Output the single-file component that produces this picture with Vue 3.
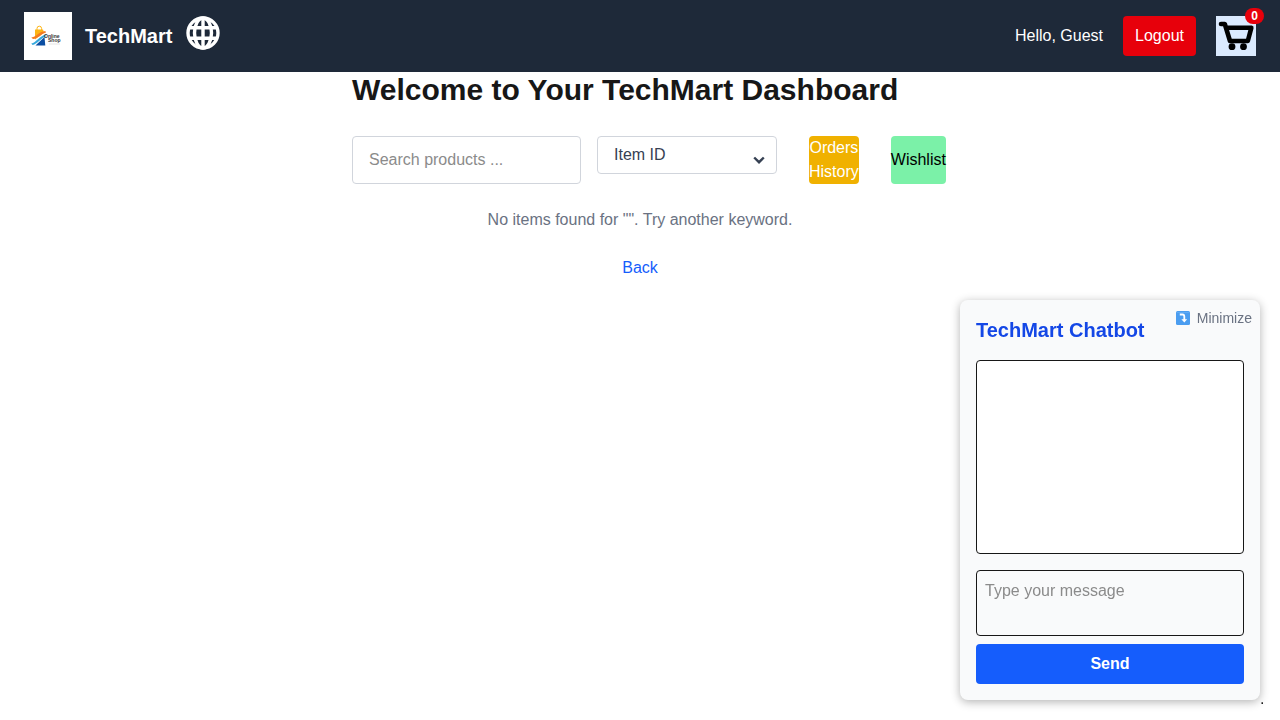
<script setup>
import { ref } from 'vue'

const query = ref('')
const sortKey = ref('id')
const message = ref('')
const cartCount = ref(0)
const minimized = ref(false)
</script>

<template>
  <div class="page">
    <header class="navbar">
      <div class="brand">
        <svg class="logo" viewBox="0 0 48 48" role="img" aria-label="Online Shop">
          <rect width="48" height="48" fill="#fff" />
          <path d="M11 17.500h8l1 3-9 7z" fill="#fdb515" />
          <path d="M13 18v-1.500a2.300 2.300 0 0 1 4.600 0V18" fill="none" stroke="#fdb515" stroke-width="1" />
          <path d="M20.500 25l.8 8.500H11.500z" fill="#0b4ea2" />
          <path d="M7.300 25.500c5.500-1 8-6 14-6.500l.7 1.500c-5 1.500-7.500 6-13 6.500z" fill="#f47b20" />
          <path d="M7.300 31.500c5-1 8-7.500 14.500-9l-.3 2C16 27 13.500 32 8.500 33z" fill="#35a8dc" />
          <text x="20" y="25.500" class="logo-text">Online</text>
          <text x="24" y="30" class="logo-text">Shop</text>
          <path d="M25 32h11" stroke="#d4d4d4" stroke-width=".6" />
        </svg>
        <span class="brand-name">TechMart</span>
        <svg class="globe" viewBox="0 0 34 34" aria-hidden="true">
          <g fill="none" stroke="#fff" stroke-width="3.400">
            <circle cx="17" cy="17" r="15" />
            <ellipse cx="17" cy="17" rx="8.500" ry="15" />
            <path d="M17 2v30M4 11.700h26M4 22.300h26" />
          </g>
        </svg>
      </div>
      <div class="account">
        <span>Hello, Guest</span>
        <button class="logout" type="button">Logout</button>
        <button class="cart" type="button" aria-label="Shopping cart">
          <svg viewBox="0 0 40 40" aria-hidden="true">
            <g fill="none" stroke="#000" stroke-width="4.600" stroke-linecap="round" stroke-linejoin="round">
              <path d="M5 8h3.800l5.200 17h17.800L35.300 11.800H10.500" />
            </g>
            <circle cx="16" cy="30.700" r="3.400" />
            <circle cx="27.500" cy="30.700" r="3.400" />
          </svg>
          <span class="badge">{{ cartCount }}</span>
        </button>
      </div>
    </header>

    <main class="dashboard">
      <h1>Welcome to Your TechMart Dashboard</h1>
      <div class="toolbar">
        <input v-model="query" class="search" type="text" placeholder="Search products ..." aria-label="Search products" />
        <div class="sort">
          <select v-model="sortKey" aria-label="Sort by">
            <option value="id">Item ID</option>
            <option value="name">Name</option>
            <option value="price">Price</option>
          </select>
          <svg class="chevron" viewBox="0 0 12 8" aria-hidden="true">
            <path d="M1.200 1.500L6 6.200l4.800-4.700" fill="none" stroke="#364153" stroke-width="2.400" />
          </svg>
        </div>
        <button class="action orders" type="button">Orders History</button>
        <button class="action wishlist" type="button">Wishlist</button>
      </div>
      <p class="empty">No items found for "{{ query }}". Try another keyword.</p>
      <a class="back" href="#">Back</a>
    </main>

    <aside class="chat-dock">
      <section class="chat">
        <button class="minimize" type="button" @click="minimized = !minimized">
          <svg viewBox="0 0 14 14" aria-hidden="true">
            <rect width="14" height="14" rx="1.500" fill="#4b9df0" />
            <path d="M1 1h12v1H1z" fill="#5fabf5" />
            <path d="M3.800 3.500h2.700Q8.300 3.500 8.300 5.500V9" fill="none" stroke="#fff" stroke-width="1.800" />
            <path d="M5.400 8.300h5.800L8.300 11.500z" fill="#fff" />
          </svg>
          <span>Minimize</span>
        </button>
        <h2>TechMart Chatbot</h2>
        <template v-if="!minimized">
          <div class="messages" role="log"></div>
          <textarea v-model="message" rows="2" placeholder="Type your message" aria-label="Type your message"></textarea>
          <button class="send" type="button">Send</button>
        </template>
      </section>
      <span class="dot">.</span>
    </aside>
  </div>
</template>

<style>
body {
  margin: 0;
  background: #fff;
}
</style>

<style scoped>
.page {
  color: #171717;
  font-family: "Liberation Sans", Arial, Helvetica, sans-serif;
  font-size: 16px;
  line-height: 24px;
}
.page * {
  box-sizing: border-box;
}
button,
input,
select,
textarea {
  margin: 0;
  padding: 0;
  border: 0;
  font: inherit;
  color: inherit;
  background: transparent;
}
button {
  cursor: pointer;
}
.navbar {
  display: flex;
  align-items: center;
  justify-content: space-between;
  padding: 12px 24px;
  background: #1e2939;
  color: #fff;
}
.brand {
  display: flex;
  align-items: center;
}
.logo {
  width: 48px;
  height: 48px;
}
.logo-text {
  font-size: 5px;
  font-weight: 700;
  fill: #333;
}
.brand-name {
  margin-left: 13px;
  font-size: 20px;
  line-height: 28px;
  font-weight: 700;
}
.globe {
  width: 34px;
  height: 34px;
  margin: 0 0 6px 14px;
}
.account {
  display: flex;
  align-items: center;
  gap: 20px;
}
.logout {
  padding: 8px 12px;
  border-radius: 4px;
  background: #e7000b;
}
.cart {
  position: relative;
  width: 40px;
  height: 40px;
  background: #dbeafe;
}
.cart svg {
  display: block;
  width: 40px;
  height: 40px;
}
.badge {
  position: absolute;
  top: -8px;
  right: -8px;
  padding: 0 6px;
  border-radius: 8px;
  background: #e7000b;
  color: #fff;
  font-size: 12px;
  line-height: 16px;
  font-weight: 700;
}
.dashboard {
  max-width: 576px;
  margin: 0 auto;
}
h1 {
  margin: 0 0 28px;
  font-size: 30px;
  line-height: 36px;
  font-weight: 700;
}
.toolbar {
  display: flex;
  margin-bottom: 24px;
}
.search {
  flex: none;
  width: 229px;
  height: 48px;
  padding: 0 16px;
  border: 1px solid #d1d5dc;
  border-radius: 4px;
}
.search::placeholder,
textarea::placeholder {
  color: #8b8b8b;
  opacity: 1;
}
.sort {
  position: relative;
  flex: none;
  width: 180px;
  margin-left: 16px;
}
.sort select {
  display: block;
  width: 100%;
  height: 38px;
  padding: 0 16px;
  border: 1px solid #d1d5dc;
  border-radius: 4px;
  appearance: none;
  color: #364153;
}
.chevron {
  position: absolute;
  top: 20px;
  right: 12px;
  width: 12px;
  height: 8px;
  pointer-events: none;
}
.action {
  flex: none;
  height: 48px;
  margin-left: 32px;
  border-radius: 4px;
}
.orders {
  width: min-content;
  background: #f0b100;
  color: #fff;
}
.wishlist {
  background: #7bf1a8;
  color: #000;
}
.empty {
  margin: 0 0 24px;
  text-align: center;
  color: #6a7282;
}
.back {
  display: block;
  width: fit-content;
  margin: 0 auto;
  color: #155dfc;
  text-decoration: none;
}
.chat-dock {
  position: fixed;
  right: 20px;
  bottom: 20px;
  width: 300px;
}
.chat {
  display: flex;
  flex-direction: column;
  padding: 16px;
  border-radius: 8px;
  background: #f9fafb;
  box-shadow: 0 2px 10px rgba(0, 0, 0, 0.3);
}
.minimize {
  position: absolute;
  top: 8px;
  right: 8px;
  display: flex;
  align-items: center;
  gap: 7px;
  color: #6a7282;
  font-size: 14px;
  line-height: 20px;
}
.minimize svg {
  width: 14px;
  height: 14px;
}
h2 {
  margin: 0 0 16px;
  color: #1447e6;
  font-size: 20px;
  line-height: 28px;
  font-weight: 700;
}
.messages {
  height: 194px;
  margin-bottom: 16px;
  border: 1px solid #171717;
  border-radius: 4px;
  background: #fff;
}
textarea {
  height: 66px;
  margin-bottom: 8px;
  padding: 8px;
  border: 1px solid #171717;
  border-radius: 4px;
  resize: none;
}
.send {
  padding: 8px;
  border-radius: 4px;
  background: #155dfc;
  color: #fff;
  font-weight: 700;
}
.dot {
  position: absolute;
  left: 100%;
  bottom: -11px;
  color: #171717;
}
</style>
